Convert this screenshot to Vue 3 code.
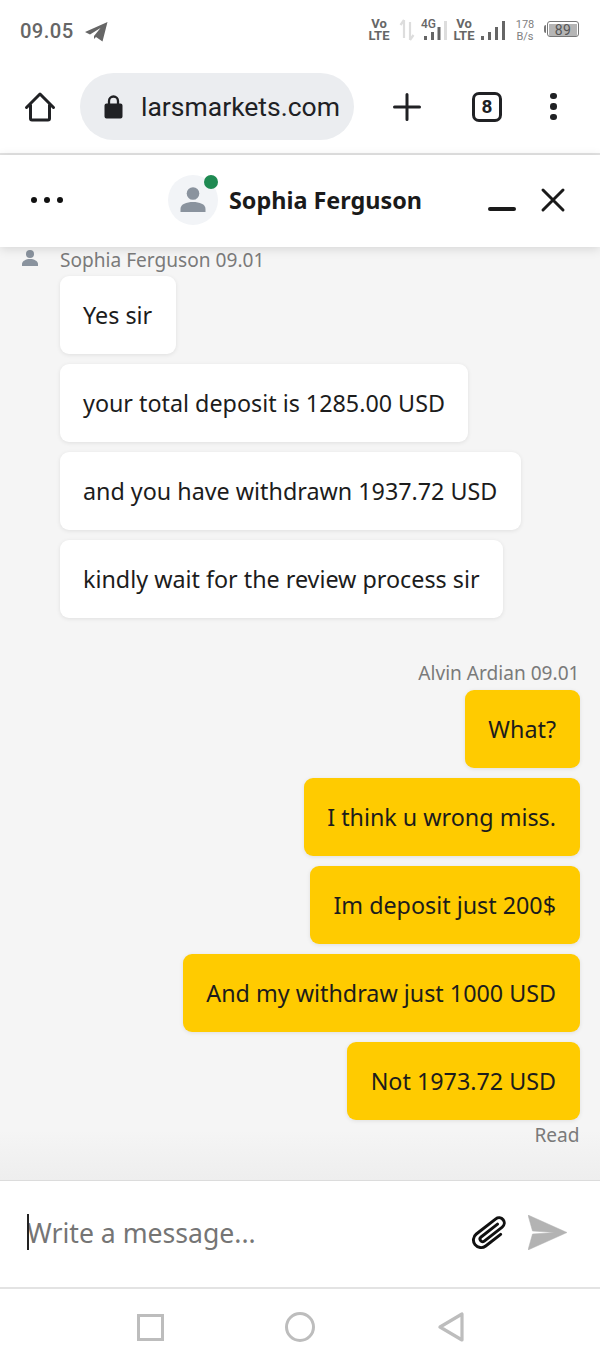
<script setup>
const incoming = [
  'Yes sir',
  'your total deposit is 1285.00 USD',
  'and you have withdrawn 1937.72 USD',
  'kindly wait for the review process sir'
]
const outgoing = [
  'What?',
  'I think u wrong miss.',
  'Im deposit just 200$',
  'And my withdraw just 1000 USD',
  'Not 1973.72 USD'
]
</script>

<template>
  <div class="phone">
    <div class="status">
      <div class="status-left">
        <span class="time">09.05</span>
        <svg class="tg" width="24" height="21" viewBox="0 0 24 21"><path d="M1 11 23.500 1 18.500 20.500 12 16 10 18 10 15 16.500 7 6 13.500Z" fill="#666"/></svg>
      </div>
      <div class="status-right">
        <span class="vo">Vo LTE</span>
        <svg class="arrows" width="16" height="22" viewBox="0 0 16 22"><path d="M5 1v18M5 1 1.500 6M11 21V3M11 21l3.500-5" stroke="#ddd" stroke-width="2.200" fill="none"/></svg>
        <span class="sig">
          <span class="net">4G</span>
          <svg width="26" height="19" viewBox="0 0 26 19"><rect x="3" y="15" width="3" height="4" fill="#666"/><rect x="10" y="11" width="3" height="8" fill="#666"/><rect x="16.500" y="6" width="3" height="13" fill="#666"/><rect x="23" y="0" width="3" height="19" fill="#ddd"/></svg>
        </span>
        <span class="vo vo-two">Vo LTE</span>
        <svg class="bars" width="24" height="19" viewBox="0 0 24 19"><rect x="0" y="15" width="3" height="4" fill="#666"/><rect x="7" y="11" width="3" height="8" fill="#666"/><rect x="14" y="6" width="3" height="13" fill="#666"/><rect x="21" y="0" width="3" height="19" fill="#666"/></svg>
        <span class="speed">178 B/s</span>
        <div class="battery-wrap">
          <span class="battery-tip"></span>
          <span class="battery"><span class="level">89</span></span>
        </div>
      </div>
    </div>

    <div class="browser">
      <svg class="home" width="32" height="32" viewBox="0 0 32 32"><path d="M2.500 16.500 16 3 29.500 16.500M6.500 14v13.500a1.500 1.500 0 0 0 1.500 1.500h16a1.500 1.500 0 0 0 1.500-1.500V14" fill="none" stroke="#202124" stroke-width="3" stroke-linecap="round" stroke-linejoin="round"/></svg>
      <div class="omnibox">
        <svg class="lock" width="19" height="24" viewBox="0 0 19 24"><path d="M2.500 8.500h14a2 2 0 0 1 2 2v11a2 2 0 0 1-2 2h-14a2 2 0 0 1-2-2v-11a2 2 0 0 1 2-2Z" fill="#202124"/><path d="M5 9V6a4.500 4.500 0 0 1 9 0v3" fill="none" stroke="#202124" stroke-width="2.300"/></svg>
        <span class="url">larsmarkets.com</span>
      </div>
      <svg class="plus" width="28" height="28" viewBox="0 0 28 28"><path d="M14 1.500v25M1.500 14h25" stroke="#202124" stroke-width="3" stroke-linecap="round"/></svg>
      <div class="tabs">8</div>
      <div class="menu"><i></i><i></i><i></i></div>
    </div>

    <div class="chat">
      <header class="chat-head">
        <div class="more"><i></i><i></i><i></i></div>
        <div class="agent">
          <div class="avatar">
            <svg width="26" height="26" viewBox="0 0 26 26"><circle cx="13" cy="6.500" r="6.300" fill="#8a939e"/><path d="M0.500 25v-3c0-5 6-7 12.500-7s12.500 2 12.500 7v3Z" fill="#8a939e"/></svg>
            <span class="online"></span>
          </div>
          <span class="agent-name">Sophia Ferguson</span>
        </div>
        <div class="head-actions">
          <span class="minimize"></span>
          <svg width="26" height="26" viewBox="0 0 26 26"><path d="M3 3 23 23M23 3 3 23" stroke="#1a1a1a" stroke-width="3" stroke-linecap="round"/></svg>
        </div>
      </header>

      <main class="messages">
        <div class="meta-in">
          <svg width="18" height="18" viewBox="0 0 18 18"><circle cx="9" cy="5" r="4" fill="#8a939e"/><path d="M1 17v-2c0-3 4-5 8-5s8 2 8 5v2Z" fill="#8a939e"/></svg>
          <span>Sophia Ferguson 09.01</span>
        </div>
        <div class="group in">
          <div v-for="m in incoming" :key="m" class="bubble white">{{ m }}</div>
        </div>

        <div class="meta-out">Alvin Ardian 09.01</div>
        <div class="group out">
          <div v-for="m in outgoing" :key="m" class="bubble yellow">{{ m }}</div>
        </div>
        <div class="read">Read</div>
      </main>

      <div class="composer">
        <div class="input"><span class="caret"></span><span>Write a message...</span></div>
        <svg class="clip" width="38" height="34" viewBox="0 0 38 34"><g transform="translate(19 17) rotate(-38) scale(.95)"><path d="M8 8H-12A8 8 0 0 1-12-8H14A5.500 5.500 0 0 1 14 3H-10A2.750 2.750 0 0 1-10-2.500H12" fill="none" stroke="#111" stroke-width="3.100" stroke-linecap="round"/></g></svg>
        <svg class="send" width="39" height="35" viewBox="0 0 39 35"><path d="M0 0 39 17.500 0 35 4.500 19 27 17.500 4.500 16Z" fill="#b3b3b3" stroke="#b3b3b3" stroke-width=".5" stroke-linejoin="round"/></svg>
      </div>
    </div>

    <nav class="softkeys">
      <span class="key-square"></span>
      <span class="key-circle"></span>
      <svg width="26" height="30" viewBox="0 0 26 30"><path d="M24 2v26L2 15Z" fill="none" stroke="#bdbdbd" stroke-width="3.200" stroke-linejoin="round"/></svg>
    </nav>
  </div>
</template>

<style>
html, body { margin: 0; background: #fff; }
</style>

<style scoped>
.phone {
  width: 600px;
  height: 1367px;
  display: flex;
  flex-direction: column;
  overflow: hidden;
  font-family: "Noto Sans", sans-serif;
  background: #fff;
}
.status {
  height: 60px;
  flex: none;
  display: flex;
  justify-content: space-between;
  align-items: flex-start;
  padding: 18px 21px 0 20px;
  box-sizing: border-box;
}
.status-left { display: flex; align-items: center; gap: 10px; padding-top: 1px; }
.time {
  font: 500 20.200px/25px Roboto, sans-serif;
  color: #666;
  letter-spacing: .4px;
}
.status-right { display: flex; align-items: flex-start; color: #666; }
.vo {
  display: block;
  width: 22px;
  text-align: center;
  font: 700 13px/12px Roboto, sans-serif;
}
.arrows { margin: 1px 0 0 9px; }
.sig { position: relative; width: 26px; height: 22px; margin: 3px 0 0 6px; }
.sig svg { position: absolute; left: 0; top: 0; }
.net { position: absolute; left: 0; top: -3px; font: 500 12px/12px Roboto, sans-serif; }
.vo-two { margin-left: 6px; }
.bars { margin: 3px 0 0 6px; }
.speed {
  display: block;
  width: 20px;
  margin: 1px -1px 0 10px;
  text-align: center;
  font: 400 11px/12px Roboto, sans-serif;
  color: #808080;
}
.battery-wrap { display: flex; align-items: center; margin: 3px 0 0 10px; }
.battery-tip { width: 2px; height: 8px; background: #777; border-radius: 2px 0 0 2px; margin-right: 1px; }
.battery {
  width: 32px;
  height: 16px;
  border: 1px solid #777;
  border-radius: 3px;
  padding: 2px 1px;
  box-sizing: border-box;
  display: block;
}
.level {
  display: block;
  height: 12px;
  background: #b5b5b5;
  color: #555;
  font: 400 14px/12px Roboto, sans-serif;
  text-align: center;
  letter-spacing: .4px;
}
.browser {
  height: 95px;
  flex: none;
  display: flex;
  align-items: center;
  box-sizing: border-box;
  padding: 0 30px 0 24px;
  border-bottom: 2px solid #e3e3e3;
}
.home { flex: none; }
.omnibox {
  width: 274px;
  height: 67px;
  margin-left: 24px;
  border-radius: 34px;
  background: #ebedf0;
  display: flex;
  align-items: center;
  padding-left: 24px;
  box-sizing: border-box;
  flex: none;
}
.lock { flex: none; }
.url {
  margin-left: 18px;
  font: 400 26.500px/34px Roboto, sans-serif;
  color: #202124;
  white-space: nowrap;
}
.plus { margin-left: 39px; flex: none; }
.tabs {
  width: 30px;
  height: 30px;
  margin-left: 51px;
  box-sizing: border-box;
  border: 3px solid #202124;
  border-radius: 7px;
  font: 700 19px/24px "Liberation Sans Narrow", Roboto, sans-serif;
  text-align: center;
  color: #202124;
  flex: none;
}
.menu { margin-left: 48px; display: flex; flex-direction: column; gap: 4px; }
.menu i { width: 6.500px; height: 6.500px; border-radius: 50%; background: #202124; display: block; }

.chat {
  flex: 1;
  min-height: 0;
  display: flex;
  flex-direction: column;
  background: #f5f5f5;
}
.chat-head {
  height: 92px;
  flex: none;
  box-sizing: border-box;
  background: #fff;
  display: flex;
  align-items: center;
  justify-content: space-between;
  padding: 0 34px 2px 31px;
  box-shadow: 0 2px 10px rgba(0, 0, 0, .13);
  position: relative;
  z-index: 1;
}
.more { display: flex; gap: 7px; width: 71px; }
.more i { width: 6px; height: 6px; border-radius: 50%; background: #111; display: block; flex: none; }
.agent { display: flex; align-items: center; gap: 11px; }
.avatar {
  width: 50px;
  height: 50px;
  border-radius: 50%;
  background: #f2f4f7;
  position: relative;
  display: flex;
  align-items: center;
  justify-content: center;
}
.online {
  position: absolute;
  top: 0;
  right: 0;
  width: 14px;
  height: 14px;
  border-radius: 50%;
  background: #1f8a52;
}
.agent-name { font-size: 23.400px; line-height: 30px; font-weight: 700; color: #1a1a1a; white-space: nowrap; }
.head-actions { display: flex; align-items: center; gap: 24px; width: 78px; }
.minimize { width: 28px; height: 4px; border-radius: 2px; background: #1a1a1a; margin-top: 17px; flex: none; }

.messages {
  flex: 1;
  min-height: 0;
  display: flex;
  flex-direction: column;
  padding: 0 20.500px 0 21px;
  background: linear-gradient(#f5f5f5 calc(100% - 50px), #eeeeee);
}
.meta-in {
  display: flex;
  align-items: center;
  gap: 21px;
  font-size: 19.100px;
  line-height: 26px;
  color: #7a7a7a;
  height: 32px;
  margin-top: -3px;
  flex: none;
}
.meta-in svg { margin-top: -5px; }
.group { display: flex; flex-direction: column; gap: 10px; flex: none; }
.group.in { align-items: flex-start; padding-left: 38.500px; }
.group.out { align-items: flex-end; }
.bubble {
  height: 78px;
  box-sizing: border-box;
  padding: 0 23.500px;
  display: flex;
  align-items: center;
  border-radius: 9px;
  font-size: 23.300px;
  color: #1c1c1c;
  white-space: nowrap;
  box-shadow: 0 1px 4px rgba(0, 0, 0, .09);
}
.white { background: #fff; }
.yellow { background: #ffcb00; }
.meta-out {
  margin-top: 42px;
  height: 30px;
  line-height: 26px;
  font-size: 19.100px;
  color: #7a7a7a;
  text-align: right;
  flex: none;
}
.read { font-size: 19.100px; line-height: 30px; color: #7a7a7a; text-align: right; flex: none; }

.composer {
  height: 109px;
  flex: none;
  box-sizing: border-box;
  background: #fff;
  border-top: 1px solid #dcdcdc;
  border-bottom: 2px solid #e3e3e3;
  display: flex;
  align-items: center;
  padding: 0 0 3px 27px;
}
.input { flex: 1; display: flex; align-items: center; font-size: 26.600px; color: #757575; position: relative; }
.caret { position: absolute; left: 0; top: -1px; width: 2px; height: 36px; background: #222; }
.clip { margin-right: 19px; flex: none; }
.send { margin-right: 33px; flex: none; }

.softkeys {
  height: 78px;
  flex: none;
  box-sizing: border-box;
  display: flex;
  align-items: center;
  padding: 0 0 2px 137px;
  gap: 122px;
  background: #fff;
}
.key-square { width: 21px; height: 21px; border: 3px solid #bdbdbd; box-sizing: content-box; flex: none; }
.key-circle { width: 24px; height: 24px; border: 3px solid #bdbdbd; border-radius: 50%; flex: none; margin-left: -1px; margin-right: 1px; }
</style>
